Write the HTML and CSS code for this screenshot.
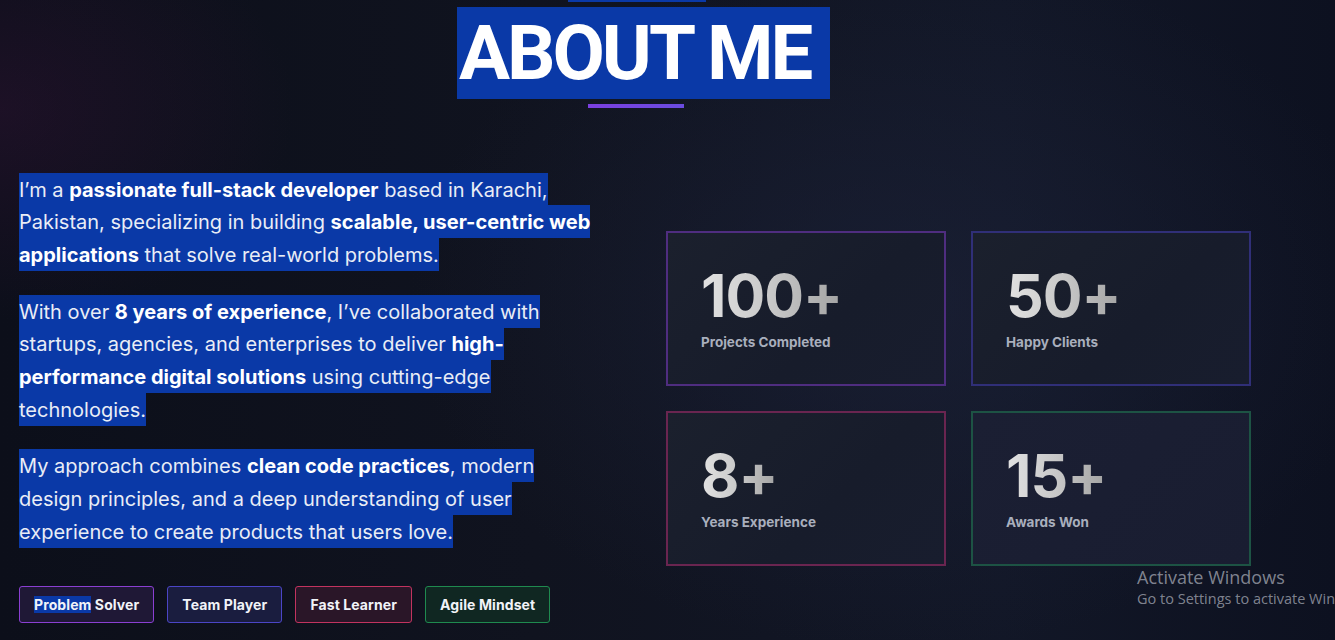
FILE: index.html
```html
<!DOCTYPE html>
<html lang="en">
<head>
<meta charset="utf-8">
<title>About Me</title>
<link rel="stylesheet" href="styles.css">
</head>
<body>
<section class="about">
  <div class="top-sel"></div>
  <div class="container">
    <header class="head">
      <h1 class="title"><span class="hl">ABOUT ME&nbsp;</span></h1>
      <div class="underline"></div>
    </header>
    <div class="grid">
      <div class="left">
        <p class="para"><span class="hl">I’m a <b>passionate full-stack developer</b> based in Karachi, Pakistan, specializing in building <b>scalable, user-centric web applications</b> that solve real-world problems.</span></p>
        <p class="para"><span class="hl">With over <b>8 years of experience</b>, I’ve collaborated with startups, agencies, and enterprises to deliver <b>high-performance digital solutions</b> using cutting-edge technologies.</span></p>
        <p class="para"><span class="hl">My approach combines <b>clean code practices</b>, modern design principles, and a deep understanding of user experience to create products that users love.</span></p>
        <div class="tags">
          <span class="tag tag-purple"><span><span class="tag-hl">Problem</span> Solver</span></span>
          <span class="tag tag-blue">Team Player</span>
          <span class="tag tag-pink">Fast Learner</span>
          <span class="tag tag-green">Agile Mindset</span>
        </div>
      </div>
      <div class="stats">
        <div class="card card-purple"><div class="num">100+</div><div class="label">Projects Completed</div></div>
        <div class="card card-blue"><div class="num">50+</div><div class="label">Happy Clients</div></div>
        <div class="card card-pink"><div class="num">8+</div><div class="label">Years Experience</div></div>
        <div class="card card-green"><div class="num">15+</div><div class="label">Awards Won</div></div>
      </div>
    </div>
  </div>
  <div class="watermark">
    <div class="wm-title">Activate Windows</div>
    <div class="wm-sub">Go to Settings to activate Windows.</div>
  </div>
</section>
</body>
</html>
```
FILE: styles.css
```css
* { box-sizing: border-box; }
html, body { margin: 0; padding: 0; }
body {
  width: 1335px;
  height: 640px;
  overflow: hidden;
  font-family: "Inter", "Noto Sans", sans-serif;
  color: #e9edf6;
  background: #0e1220;
}
.about {
  position: relative;
  width: 1335px;
  height: 640px;
  overflow: hidden;
  background:
    radial-gradient(ellipse 420px 300px at 0px 110px, rgba(60, 20, 60, 0.35), rgba(0,0,0,0) 70%),
    radial-gradient(ellipse 700px 500px at 900px 300px, rgba(30, 36, 60, 0.55), rgba(0,0,0,0) 70%),
    linear-gradient(90deg, #0c0f1a 0%, #10131f 40%, #121727 75%, #0d1120 100%);
}
.top-sel {
  position: absolute;
  left: 568px;
  top: 0;
  width: 138px;
  height: 2px;
  background: #0a39a7;
}
.container {
  margin-left: 19px;
  width: 1231px;
  padding-top: 7px;
}
.head {
  display: flex;
  flex-direction: column;
  align-items: center;
}
.title {
  margin: 0 0 0 18px;
  font-family: "Roboto", "Inter", sans-serif;
  font-size: 76px;
  line-height: 92px;
  font-weight: 700;
  letter-spacing: -3px;
  color: #ffffff;
}
.title .hl {
  background: #0a39a7;
  display: inline-block;
  padding: 0 4px 0 2px;
}
.underline {
  width: 96px;
  height: 4px;
  margin-top: 5px;
  margin-left: 2px;
  background: linear-gradient(90deg, #7b3fe0, #6a4ce0);
}
.grid {
  display: grid;
  grid-template-columns: 1fr 584px;
  column-gap: 64px;
  align-items: center;
  margin-top: 65px;
}
.para {
  margin: 0 0 24px 0;
  font-size: 20px;
  line-height: 32.7px;
  max-width: 580px;
  letter-spacing: 0;
}
.para .hl {
  background: #0a39a7;
  padding: 4.5px 0;
  -webkit-box-decoration-break: clone;
  box-decoration-break: clone;
}
.para b { font-weight: 700; color: #ffffff; }
.tags {
  display: flex;
  gap: 13px;
  margin-top: 38px;
}
.tag {
  height: 37px;
  display: inline-flex;
  align-items: center;
  padding: 0 14px;
  border-radius: 3px;
  font-size: 14px;
  font-weight: 700;
  letter-spacing: 0.1px;
  color: #f1f3f8;
  border: 1px solid;
}
.tag-hl { background: #0a39a7; }
.tag-purple { border-color: #8a3fd2; background: #1f1836; }
.tag-blue { border-color: #4b45c6; background: #1a1d3f; }
.tag-pink { border-color: #c2335f; background: #2a1628; }
.tag-green { border-color: #1f8a4f; background: #102722; }
.stats {
  display: grid;
  grid-template-columns: 280px 280px;
  gap: 25px;
}
.card {
  height: 155px;
  padding: 33px 0 0 33px;
  border: 2px solid;
  background: linear-gradient(135deg, #1b202d 0%, #171c2b 60%, #181d2e 100%);
}
.card-purple { border-color: #4f2d80; }
.card-blue { border-color: #302f78; }
.card-pink { border-color: #6a2550; }
.card-green { border-color: #1d5344; background: linear-gradient(135deg, #1b1f33, #191d31); }
.num {
  display: inline-block;
  font-size: 59px;
  line-height: 60px;
  font-weight: 700;
  letter-spacing: -1px;
  background: linear-gradient(90deg, #e2e2e2 0%, #c8c8c8 50%, #a3a3a3 100%);
  -webkit-background-clip: text;
  background-clip: text;
  color: transparent;
}
.label {
  margin-top: 8px;
  font-size: 13.5px;
  font-weight: 700;
  color: #a9afbd;
}
.watermark {
  position: absolute;
  left: 1137px;
  top: 565px;
  white-space: nowrap;
  font-family: "Open Sans", "Noto Sans", sans-serif;
  color: rgba(200, 204, 214, 0.62);
}
.wm-title { font-size: 18px; line-height: 24px; }
.wm-sub { font-size: 14.5px; line-height: 20px; }
```
